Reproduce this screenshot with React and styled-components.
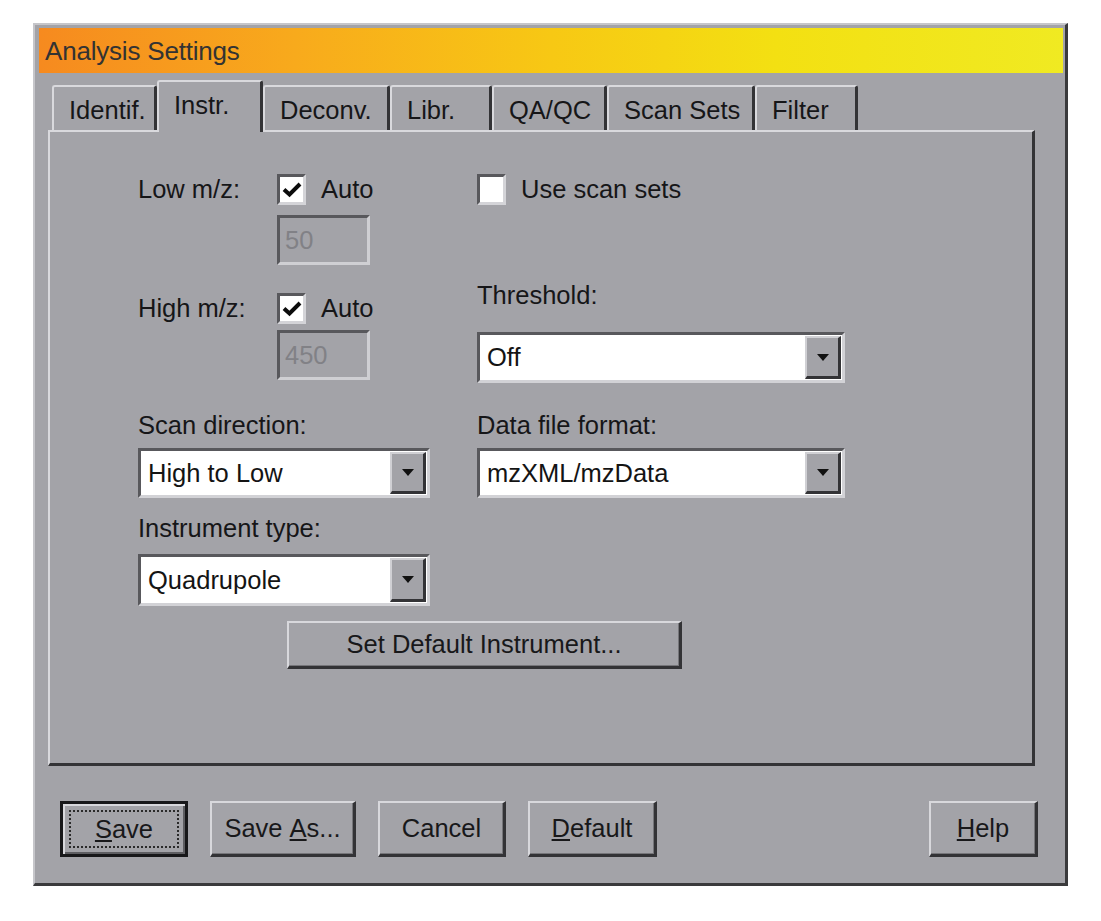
import React from 'react';
import styled, { createGlobalStyle } from 'styled-components';

const FACE = '#a3a3a8';
const LIGHT = '#d9d9dd';
const DARK = '#333336';
const SUNK = '#58585c';

const GlobalStyle = createGlobalStyle`
  html, body { margin: 0; padding: 0; background: #ffffff; }
  body { font-family: "Liberation Sans", Arial, sans-serif; color: #161618; }
  * { box-sizing: border-box; }
`;

const Page = styled.div`
  padding: 23px 0 0 33px;
`;

const Window = styled.div`
  width: 1035px;
  height: 863px;
  background: ${FACE};
  border-style: solid;
  border-width: 2px 3px 3px 2px;
  border-color: #c6c6ca #3a3a3c #3a3a3c #c6c6ca;
  padding: 3px 2px 0 4px;
  display: flex;
  flex-direction: column;
`;

const TitleBar = styled.div`
  height: 45px;
  flex: 0 0 45px;
  display: flex;
  align-items: center;
  padding: 2px 0 0 6px;
  background: linear-gradient(to right, #f68a1f 0%, #f8aa1c 25%, #f7c814 50%, #f3e012 72%, #f0ea22 100%);
  font-size: 26px;
  color: #333333;
  letter-spacing: -0.2px;
`;

const Body = styled.div`
  display: flex;
  flex-direction: column;
  padding: 0 28px 0 9px;
`;

const TabStrip = styled.div`
  margin-top: 7px;
  height: 50px;
  display: flex;
  align-items: flex-end;
  padding-left: 4px;
  position: relative;
  z-index: 1;
`;

const Tab = styled.div`
  width: ${p => p.$w}px;
  height: ${p => (p.$active ? 52 : 45)}px;
  margin-bottom: ${p => (p.$active ? -2 : 0)}px;
  background: ${FACE};
  border-top: 2px solid ${LIGHT};
  border-left: 2px solid ${LIGHT};
  border-right: 3px solid ${DARK};
  border-top-left-radius: 3px;
  border-top-right-radius: 3px;
  padding: 8px 0 0 15px;
  font-size: 25.5px;
  line-height: 30px;
  white-space: nowrap;
`;

const Panel = styled.div`
  height: 636px;
  border-style: solid;
  border-width: 2px 3px 3px 2px;
  border-color: ${LIGHT} ${DARK} ${DARK} ${LIGHT};
  padding: 41px 0 0 88px;
  display: flex;
  flex-direction: column;
`;

const TopSection = styled.div`
  display: flex;
`;

const Column = styled.div`
  width: ${p => p.$w}px;
  display: flex;
  flex-direction: column;
`;

const CheckRow = styled.div`
  display: flex;
  align-items: center;
  height: ${p => p.$h || 32}px;
  margin-top: ${p => p.$mt || 0}px;
`;

const FieldLabel = styled.div`
  font-size: 25.5px;
  line-height: 30px;
  width: ${p => (p.$w ? `${p.$w}px` : 'auto')};
  margin-top: ${p => p.$mt || 0}px;
  white-space: nowrap;
`;

const CheckBox = styled.div`
  width: 29px;
  height: 31px;
  background: #ffffff;
  border-style: solid;
  border-width: 3px;
  border-color: ${SUNK} #d4d4d8 #d4d4d8 ${SUNK};
  display: flex;
  align-items: center;
  justify-content: center;
`;

const CheckText = styled.span`
  margin-left: 15px;
  font-size: 25.5px;
  line-height: 30px;
`;

const NumBox = styled.div`
  margin: ${p => p.$mt}px 0 0 139px;
  width: 93px;
  height: 50px;
  border-style: solid;
  border-width: 3px;
  border-color: ${SUNK} #cfcfd3 #cfcfd3 ${SUNK};
  background: ${FACE};
  color: #818186;
  font-size: 25.5px;
  display: flex;
  align-items: center;
  padding-left: 5px;
`;

const Combo = styled.div`
  width: ${p => p.$w}px;
  height: ${p => p.$h}px;
  margin-top: ${p => p.$mt}px;
  border-style: solid;
  border-width: 3px;
  border-color: ${SUNK} #d2d2d6 #d2d2d6 ${SUNK};
  background: #ffffff;
  display: flex;
  align-items: stretch;
  padding: 1px;
`;

const ComboValue = styled.div`
  flex: 1;
  display: flex;
  align-items: center;
  padding-left: 6px;
  font-size: 25.5px;
  color: #141414;
`;

const DropButton = styled.div`
  width: 36px;
  background: ${FACE};
  border-style: solid;
  border-width: 2px 3px 3px 2px;
  border-color: #d0d0d4 ${DARK} ${DARK} #d0d0d4;
  display: flex;
  align-items: center;
  justify-content: center;
`;

const Arrow = styled.span`
  width: 0;
  height: 0;
  border-left: 6px solid transparent;
  border-right: 6px solid transparent;
  border-top: 7px solid #111;
`;

const MidSection = styled.div`
  display: flex;
  gap: 47px;
  margin-top: 27px;
`;

const Field = styled.div`
  display: flex;
  flex-direction: column;
`;

const PushButton = styled.div`
  width: ${p => p.$w}px;
  height: ${p => p.$h || 56}px;
  margin-left: ${p => (p.$push ? 'auto' : `${p.$ml || 0}px`)};
  margin-top: ${p => p.$mt || 0}px;
  background: ${FACE};
  border-style: solid;
  border-width: ${p => (p.$default ? '3px' : '2px 3px 3px 2px')};
  border-color: ${p => (p.$default ? '#18181a' : `#d8d8dc ${DARK} ${DARK} #d8d8dc`)};
  box-shadow: ${p => (p.$default ? `inset 2px 2px #d8d8dc, inset -2px -2px #5e5e62` : 'inset -1px -1px #76767a')};
  display: flex;
  align-items: center;
  justify-content: center;
  font-size: 25.5px;
  color: #18181a;
  white-space: nowrap;
`;

const FocusRing = styled.span`
  flex: 1;
  align-self: stretch;
  margin: 6px;
  border: 2px dotted #2a2a2a;
  display: flex;
  align-items: center;
  justify-content: center;
`;

const ButtonRow = styled.div`
  display: flex;
  gap: 22px;
  margin: 35px -3px 0 0;
  padding-left: 12px;
`;

const tabs = [
  { label: 'Identif.', w: 105 },
  { label: 'Instr.', w: 106, active: true },
  { label: 'Deconv.', w: 127 },
  { label: 'Libr.', w: 102 },
  { label: 'QA/QC', w: 115 },
  { label: 'Scan Sets', w: 148 },
  { label: 'Filter', w: 103 },
];

const Check = ({ checked }) => (
  <CheckBox>
    {checked && (
      <svg width="20" height="17" viewBox="0 0 20 17">
        <polyline points="2,8.5 7.5,13.5 18,3" fill="none" stroke="#0c0c0c" strokeWidth="4" />
      </svg>
    )}
  </CheckBox>
);

const ComboBox = ({ value, w, h, mt }) => (
  <Combo $w={w} $h={h} $mt={mt}>
    <ComboValue>{value}</ComboValue>
    <DropButton>
      <Arrow />
    </DropButton>
  </Combo>
);

export default function App() {
  return (
    <Page>
      <GlobalStyle />
      <Window>
        <TitleBar>Analysis Settings</TitleBar>
        <Body>
          <TabStrip>
            {tabs.map(t => (
              <Tab key={t.label} $w={t.w} $active={t.active}>
                {t.label}
              </Tab>
            ))}
          </TabStrip>
          <Panel>
            <TopSection>
              <Column $w={339}>
                <CheckRow>
                  <FieldLabel $w={139}>Low m/z:</FieldLabel>
                  <Check checked />
                  <CheckText>Auto</CheckText>
                </CheckRow>
                <NumBox $mt={10}>50</NumBox>
                <CheckRow $mt={27}>
                  <FieldLabel $w={139}>High m/z:</FieldLabel>
                  <Check checked />
                  <CheckText>Auto</CheckText>
                </CheckRow>
                <NumBox $mt={6}>450</NumBox>
              </Column>
              <Column $w={368}>
                <CheckRow>
                  <Check />
                  <CheckText>Use scan sets</CheckText>
                </CheckRow>
                <FieldLabel $mt={75}>Threshold:</FieldLabel>
                <ComboBox value="Off" w={368} h={51} mt={22} />
              </Column>
            </TopSection>
            <MidSection>
              <Field>
                <FieldLabel>Scan direction:</FieldLabel>
                <ComboBox value="High to Low" w={292} h={50} mt={8} />
              </Field>
              <Field>
                <FieldLabel>Data file format:</FieldLabel>
                <ComboBox value="mzXML/mzData" w={368} h={50} mt={8} />
              </Field>
            </MidSection>
            <Field>
              <FieldLabel $mt={15}>Instrument type:</FieldLabel>
              <ComboBox value="Quadrupole" w={292} h={52} mt={11} />
            </Field>
            <PushButton $w={395} $h={48} $ml={149} $mt={15}>
              Set Default Instrument...
            </PushButton>
          </Panel>
          <ButtonRow>
            <PushButton $w={128} $default>
              <FocusRing>
                <u>S</u>ave
              </FocusRing>
            </PushButton>
            <PushButton $w={146}>
              Save&nbsp;<u>A</u>s...
            </PushButton>
            <PushButton $w={128}>Cancel</PushButton>
            <PushButton $w={129}>
              <u>D</u>efault
            </PushButton>
            <PushButton $w={109} $push>
              <u>H</u>elp
            </PushButton>
          </ButtonRow>
        </Body>
      </Window>
    </Page>
  );
}
